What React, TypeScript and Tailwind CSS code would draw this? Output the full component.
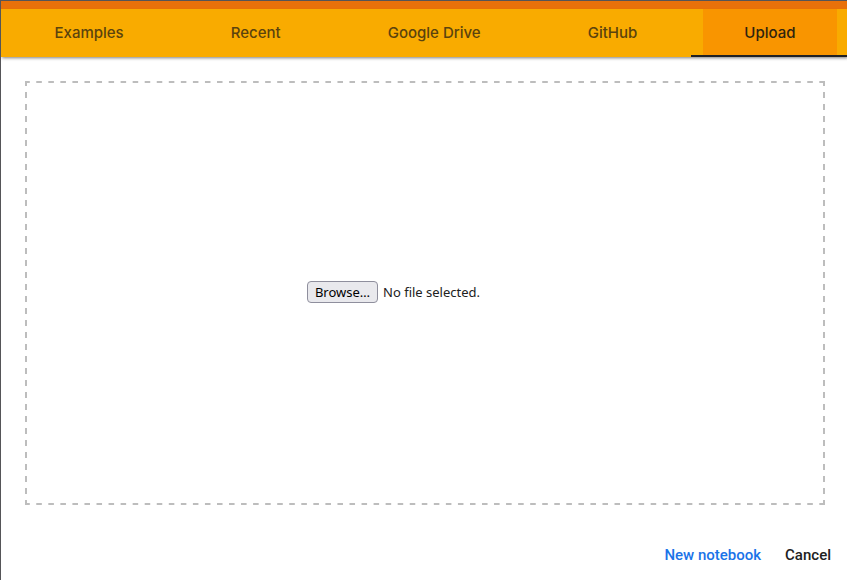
import { useRef, useState } from "react";

const tabs = ["Examples", "Recent", "Google Drive", "GitHub", "Upload"];

function TabBar({ active, onSelect }: { active: string; onSelect: (tab: string) => void }) {
  return (
    <nav
      role="tablist"
      aria-label="Open notebook"
      className="-mr-0.5 flex h-12 bg-[#f9ab00] font-['Inter',sans-serif] text-[15px] leading-5 font-medium shadow-[0_2px_3px_-1px_rgba(0,0,0,0.5)]"
    >
      {tabs.map((tab) => {
        const selected = tab === active;
        return (
          <button
            key={tab}
            type="button"
            role="tab"
            aria-selected={selected}
            onClick={() => onSelect(tab)}
            className={
              selected
                ? "flex flex-auto border-b-2 border-[#202124] px-3 text-[#2f240f]"
                : "flex flex-auto border-b-2 border-transparent px-3 text-[#5b430e]"
            }
          >
            <span
              className={
                selected
                  ? "flex h-full flex-1 items-center justify-center bg-[#f99500] pt-px whitespace-nowrap"
                  : "flex h-full flex-1 items-center justify-center pt-px whitespace-nowrap"
              }
            >
              {tab}
            </span>
          </button>
        );
      })}
    </nav>
  );
}

function FilePicker() {
  const input = useRef<HTMLInputElement>(null);
  const [name, setName] = useState("No file selected.");
  return (
    <div className="flex w-[236px] items-center gap-[5px] font-['Noto_Sans',sans-serif] text-[13px] leading-5 whitespace-nowrap">
      <input
        ref={input}
        id="notebook-file"
        type="file"
        className="hidden"
        onChange={(e) => setName(e.target.files?.[0]?.name ?? "No file selected.")}
      />
      <button
        type="button"
        onClick={() => input.current?.click()}
        className="h-[22px] w-[71px] shrink-0 rounded-[4px] border border-[#8f8f9d] bg-[#e9e9ed] leading-5 text-black"
      >
        Browse…
      </button>
      <label htmlFor="notebook-file" className="text-[#212121]">
        {name}
      </label>
    </div>
  );
}

export default function App() {
  const [active, setActive] = useState("Upload");
  return (
    <div className="flex min-h-screen flex-col overflow-x-clip border-t border-l border-[#555558] bg-white">
      <div className="h-2 bg-[#e8710a]" />
      <TabBar active={active} onSelect={setActive} />
      <main className="flex flex-1 flex-col pt-6 pr-[22px] pl-6">
        <div className="flex flex-1 items-center justify-center border-2 border-transparent bg-[image:linear-gradient(90deg,#bdbdbd_25%,transparent_25%_75%,#bdbdbd_75%),linear-gradient(90deg,#bdbdbd_25%,transparent_25%_75%,#bdbdbd_75%),linear-gradient(180deg,#bdbdbd_25%,transparent_25%_75%,#bdbdbd_75%),linear-gradient(180deg,#bdbdbd_25%,transparent_25%_75%,#bdbdbd_75%)] [background-position:left_0_top_-2px,left_0_bottom_-2px,left_-2px_top_0,right_-2px_top_0] [background-repeat:round_no-repeat,round_no-repeat,no-repeat_round,no-repeat_round] [background-size:12px_2px,12px_2px,2px_12px,2px_12px] pb-0.5">
          <FilePicker />
        </div>
      </main>
      <footer className="flex h-[75px] items-center justify-end gap-6 pt-6 pr-4 font-['Roboto',sans-serif] text-[15px] leading-5 font-medium">
        <button type="button" className="text-[#1a73e8]">
          New notebook
        </button>
        <button type="button" className="text-[#212121]">
          Cancel
        </button>
      </footer>
    </div>
  );
}
